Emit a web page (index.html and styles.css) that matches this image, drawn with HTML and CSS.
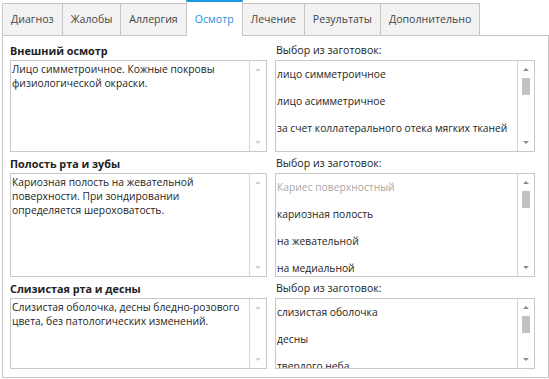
FILE: index.html
```html
<!DOCTYPE html>
<html lang="ru">
<head>
    <meta charset="UTF-8">
    <title>Осмотр</title>
    <link rel="stylesheet" href="styles.css">
</head>
<body>
<div class="tabs">
    <div class="tab">Диагноз</div>
    <div class="tab">Жалобы</div>
    <div class="tab">Аллергия</div>
    <div class="tab on">Осмотр</div>
    <div class="tab">Лечение</div>
    <div class="tab">Результаты</div>
    <div class="tab">Дополнительно</div>
</div>
<div class="panel">
    <div class="sec sec1">
        <div class="title">Внешний осмотр</div>
        <div class="label">Выбор из заготовок:</div>
        <div class="box">
            <div class="text">Лицо симметроичное. Кожные покровы<br>физиологической окраски.</div>
            <div class="bar off"><span class="up"></span><span class="down"></span></div>
        </div>
        <div class="box">
            <ul class="list">
                <li>лицо симметроичное</li>
                <li>лицо асимметричное</li>
                <li>за счет коллатерального отека мягких тканей</li>
            </ul>
            <div class="bar"><span class="up"></span><span class="thumb"></span><span class="down"></span></div>
        </div>
    </div>
    <div class="sec sec2">
        <div class="title">Полость рта и зубы</div>
        <div class="label">Выбор из заготовок:</div>
        <div class="box">
            <div class="text">Кариозная полость на жевательной<br>поверхности. При зондировании<br>определяется шероховатость.</div>
            <div class="bar off"><span class="up"></span><span class="down"></span></div>
        </div>
        <div class="box">
            <ul class="list">
                <li class="gray">Кариес поверхностный</li>
                <li>кариозная полость</li>
                <li>на жевательной</li>
                <li>на медиальной</li>
            </ul>
            <div class="bar"><span class="up"></span><span class="thumb"></span><span class="down"></span></div>
        </div>
    </div>
    <div class="sec sec3">
        <div class="title">Слизистая рта и десны</div>
        <div class="label">Выбор из заготовок:</div>
        <div class="box">
            <div class="text">Слизистая оболочка, десны бледно-розового<br>цвета, без патологических изменений.</div>
            <div class="bar off"><span class="up"></span><span class="down"></span></div>
        </div>
        <div class="box">
            <ul class="list">
                <li>слизистая оболочка</li>
                <li>десны</li>
                <li>твердого неба</li>
            </ul>
            <div class="bar"><span class="up"></span><span class="thumb"></span><span class="down"></span></div>
        </div>
    </div>
</div>
</body>
</html>
```

FILE: styles.css
```css
*{
    margin: 0;
    padding: 0;
    list-style: none;
    box-sizing: border-box;
}
body{
    font-family: "Open Sans", "Noto Sans", sans-serif;
    font-size: 10.3px;
    color: #1e1e1e;
    background: #fff;
}
.tabs{
    display: flex;
    align-items: flex-end;
    height: 35px;
    padding-left: 2px;
}
.tab{
    height: 32px;
    line-height: 31px;
    padding: 0 8px;
    border: 1px solid #c6c6c6;
    border-bottom: none;
    border-right: none;
    background: #f2f2f2;
    color: #444;
    font-size: 10.6px;
}
.tab:last-child{
    border-right: 1px solid #c6c6c6;
}
.tab.on{
    position: relative;
    z-index: 1;
    height: 36px;
    line-height: 34px;
    margin-bottom: -1px;
    background: #fff;
    border-top: 2px solid #1b95e5;
    border-right: 1px solid #c6c6c6;
    color: #1e8fe3;
}
.tab.on+.tab{
    border-left: none;
}
.panel{
    margin-left: 2px;
    width: 547px;
    height: 343px;
    border: 1px solid #c6c6c6;
    padding: 7px 0 0 7px;
}
.sec{
    display: grid;
    grid-template-columns: 257px 260px;
    column-gap: 8px;
    margin-bottom: 4px;
}
.title, .label{
    height: 17px;
    line-height: 15px;
}
.title{
    font-weight: bold;
    font-size: 10.8px;
    color: #222;
}
.label{
    padding-left: 1px;
    font-size: 10.6px;
    color: #222;
}
.box{
    display: flex;
    border: 1px solid #c8c8c8;
    overflow: hidden;
}
.sec1 .box{ height: 92px; }
.sec2 .box{ height: 104px; }
.sec3 .box{ height: 71px; }
.text{
    flex: 1;
    padding: 1px 0 0 1px;
    line-height: 14px;
    white-space: nowrap;
}
.list{
    flex: 1;
    padding-left: 1px;
    overflow: hidden;
}
.list li{
    height: 27px;
    line-height: 27px;
    white-space: nowrap;
}
.list li.gray{
    color: #a8a8a8;
}
.bar{
    position: relative;
    width: 17px;
    flex: none;
    border-left: 1px solid #d6d6d6;
}
.up, .down{
    position: absolute;
    left: 5px;
    width: 0;
    height: 0;
    border-left: 3px solid transparent;
    border-right: 3px solid transparent;
}
.up{
    top: 7px;
    border-bottom: 3px solid #8a8a8a;
}
.down{
    bottom: 7px;
    border-top: 3px solid #8a8a8a;
}
.bar.off .up{
    border-bottom-color: #d0d0d0;
}
.bar.off .down{
    border-top-color: #d0d0d0;
}
.thumb{
    position: absolute;
    left: 4px;
    top: 17px;
    width: 8px;
    height: 17px;
    background: #c2c2c2;
}
```
